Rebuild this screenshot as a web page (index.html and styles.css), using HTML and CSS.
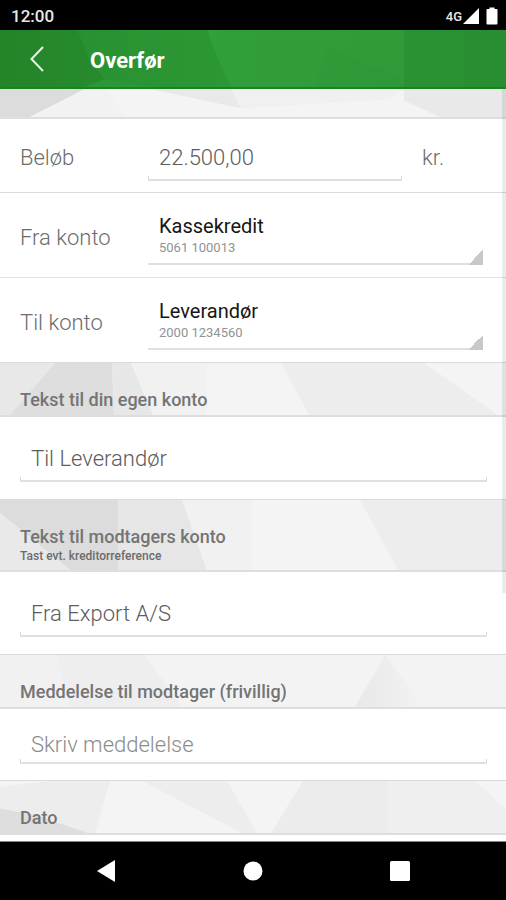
FILE: index.html
```html
<!DOCTYPE html>
<html lang="da">
<head>
<meta charset="utf-8">
<meta name="viewport" content="width=device-width, initial-scale=1">
<title>Overfør</title>
<link rel="stylesheet" href="styles.css">
</head>
<body>
<div class="status">
  <span class="clock">12:00</span>
  <span class="network">4G</span>
  <svg class="signal" width="16" height="16" viewBox="0 0 16 16"><path d="M16 0V16H0z"/></svg>
  <svg class="battery" width="12" height="18" viewBox="0 0 12 18"><path d="M3.500 0.500h5V2H10.500Q11.500 2 11.500 3V16Q11.500 17.500 10.500 17.500H1.500Q.5 17.500 .5 16.500V3Q.5 2 1.500 2H3.500z"/></svg>
</div>
<header class="appbar">
  <svg class="facets" viewBox="0 0 506 59" preserveAspectRatio="none" aria-hidden="true">
    <defs>
      <linearGradient id="left"><stop offset="0" stop-color="#238428"/><stop offset="1" stop-color="#278b2d"/></linearGradient>
      <linearGradient id="middle"><stop offset="0" stop-color="#299131"/><stop offset="1" stop-color="#2c9735"/></linearGradient>
      <linearGradient id="right"><stop offset="0" stop-color="#319f3b"/><stop offset="1" stop-color="#309a39"/></linearGradient>
    </defs>
    <rect width="506" height="59" fill="#2c9735"/>
    <polygon points="0,0 78,0 90,32 105,51 85,59 0,59" fill="url(#left)"/>
    <polygon points="78,0 207,0 218,30 231,59 150,59 105,51 90,32" fill="url(#middle)"/>
    <polygon points="207,0 404,0 404,59 231,59 218,30" fill="url(#right)"/>
    <polygon points="328,18 404,52 404,59 315,59" fill="#2e9637" opacity=".3"/>
    <polygon points="404,0 464,0 464,59 404,59" fill="#2b9233"/>
    <polygon points="464,0 506,0 506,59 464,59" fill="#298d31"/>
  </svg>
  <button class="back" type="button" aria-label="Tilbage">
    <svg width="14" height="26" viewBox="0 0 14 26"><path d="M13 1 1.500 13 13 25"/></svg>
  </button>
  <h1>Overfør</h1>
</header>
<main class="content">
  <div class="band band-top">
    <svg class="facets" viewBox="0 0 506 29" preserveAspectRatio="none" aria-hidden="true">
      <polygon points="0,0 85,0 30,29 0,29" fill="#dcdcdc"/>
      <polygon points="85,0 106,0 125,29 30,29" fill="#f2f2f2"/>
      <polygon points="150,0 231,0 241,20" fill="#e9e9e9"/>
      <polygon points="231,0 404,0 390,11 241,20" fill="#f0f0f0"/>
      <polygon points="404,0 506,0 506,29 440,29 404,12" fill="#e9e9e9"/>
    </svg>
  </div>
  <form>
    <div class="row row-amount">
      <label for="amount">Beløb</label>
      <input class="field" id="amount" type="text" inputmode="decimal" value="22.500,00">
      <span class="unit">kr.</span>
    </div>
    <div class="row row-account">
      <label for="from">Fra konto</label>
      <div class="picker">
        <select id="from"><option>Kassekredit</option></select>
        <span class="number">5061 100013</span>
      </div>
    </div>
    <div class="row row-account">
      <label for="to">Til konto</label>
      <div class="picker">
        <select id="to"><option>Leverandør</option></select>
        <span class="number">2000 1234560</span>
      </div>
    </div>
    <div class="band">
      <svg class="facets" viewBox="0 0 506 53" preserveAspectRatio="none" aria-hidden="true">
        <polygon points="0,0 55,0 10,53 0,53" fill="#e8e8e8"/>
        <polygon points="55,0 112,0 114,53 10,53" fill="#dedede"/>
        <polygon points="112,0 131,0 153,53 114,53" fill="#e7e7e7"/>
        <polygon points="131,0 207,0 207,53 153,53" fill="#f1f1f1"/>
        <polygon points="281,0 424,0 498,53 309,53" fill="#ededed"/>
      </svg>
      <label for="own-text">Tekst til din egen konto</label>
    </div>
    <div class="entry">
      <input class="field" id="own-text" type="text" value="Til Leverandør">
    </div>
    <div class="band">
      <svg class="facets" viewBox="0 0 506 71" preserveAspectRatio="none" aria-hidden="true">
        <polygon points="0,0 118,0 118,71 70,71 0,13" fill="#dcdcdc"/>
        <polygon points="0,13 70,71 0,71" fill="#e9e9e9"/>
        <polygon points="118,0 182,0 207,71 118,71" fill="#e6e6e6"/>
        <polygon points="182,0 252,0 252,71 207,71" fill="#f1f1f1"/>
        <polygon points="360,0 506,0 506,71 398,71" fill="#ededed"/>
      </svg>
      <label for="their-text">Tekst til modtagers konto</label>
      <small>Tast evt. kreditorreference</small>
    </div>
    <div class="entry">
      <input class="field" id="their-text" type="text" value="Fra Export A/S">
    </div>
    <div class="band">
      <svg class="facets" viewBox="0 0 506 53" preserveAspectRatio="none" aria-hidden="true">
        <defs>
          <linearGradient id="peak"><stop offset="0" stop-color="#e8e8e8"/><stop offset="1" stop-color="#f3f3f3"/></linearGradient>
        </defs>
        <polygon points="0,0 56,0 70,53 0,53" fill="#f1f1f1"/>
        <polygon points="56,0 145,0 182,53 70,53" fill="#eeeeee"/>
        <polygon points="145,0 506,0 506,53 182,53" fill="#f3f3f3"/>
        <polygon points="385,0 425,53 355,53" fill="url(#peak)"/>
      </svg>
      <label for="message">Meddelelse til modtager (frivillig)</label>
    </div>
    <div class="entry entry-short">
      <input class="field" id="message" type="text" placeholder="Skriv meddelelse">
    </div>
    <div class="band">
      <svg class="facets" viewBox="0 0 506 55" preserveAspectRatio="none" aria-hidden="true">
        <polygon points="0,6 50,0 110,0 95,55 88,55 0,30" fill="#ededed"/>
        <polygon points="0,29 35,36 88,55 0,55" fill="#dedede"/>
        <polygon points="142,0 227,0 257,55 242,55" fill="#ededed"/>
        <polygon points="303,0 388,0 388,55 271,55" fill="#ececec"/>
        <polygon points="388,0 475,0 506,30 506,55 388,55" fill="#efefef"/>
      </svg>
      <h2>Dato</h2>
    </div>
  </form>
  <div class="scrollbar"></div>
</main>
<nav class="navbar">
  <button type="button" aria-label="Tilbage"><svg width="20" height="22" viewBox="0 0 20 22"><path d="M19 0V22L1 11z"/></svg></button>
  <button type="button" aria-label="Hjem"><svg width="20" height="20" viewBox="0 0 20 20"><circle cx="10" cy="10" r="9.500"/></svg></button>
  <button type="button" aria-label="Seneste"><svg width="20" height="20" viewBox="0 0 20 20"><rect width="20" height="20" rx="1.500"/></svg></button>
</nav>
</body>
</html>
```

FILE: styles.css
```css
* {
  box-sizing: border-box;
}

body {
  display: flex;
  flex-direction: column;
  height: 100vh;
  margin: 0;
  font-family: Roboto, "Liberation Sans", sans-serif;
  color: #6c6c6c;
  background: #fff;
}

svg {
  display: block;
}

button {
  padding: 0;
  border: 0;
  background: none;
}

.status {
  display: flex;
  align-items: center;
  flex: none;
  height: 30px;
  padding: 2px 8px 0 11px;
  color: #e8e8e8;
  background: #000;
  fill: #fff;
}

.clock {
  flex: 1;
  font-size: 17px;
  font-weight: 500;
}

.network {
  margin-right: 1px;
  font-size: 13px;
  font-weight: 500;
}

.battery {
  margin-left: 7px;
}

.appbar {
  position: relative;
  display: flex;
  align-items: center;
  flex: none;
  height: 59px;
  padding-left: 30px;
  border-bottom: 2px solid #15861b;
  background: #2b9433;
}

.facets {
  position: absolute;
  inset: 0;
  z-index: -1;
  width: 100%;
  height: 100%;
}

.appbar,
.band {
  isolation: isolate;
}

.back {
  display: grid;
  place-items: center start;
  width: 60px;
  height: 48px;
}

.back path {
  fill: none;
  stroke: #e6f5e6;
  stroke-width: 2;
}

h1 {
  margin: 0;
  padding-top: 5px;
  font-size: 22px;
  font-weight: 700;
  line-height: 28px;
  color: #fff;
}

.content {
  position: relative;
  flex: 1;
  min-height: 0;
  overflow: hidden;
  border-bottom: 1px solid #888;
}

.band {
  position: relative;
  padding: 27px 20px 5px;
  border-top: 1px solid #dadada;
  border-bottom: 2px solid #dedede;
  background: #f4f4f4;
}

.band-top {
  height: 30px;
  padding: 0;
  border-top: 0;
}

.band label,
h2 {
  display: block;
  margin: 0;
  font-size: 18px;
  font-weight: 500;
  line-height: 20px;
  color: #747474;
}

small {
  display: block;
  font-size: 12px;
  font-weight: 500;
  line-height: 18px;
}

.row {
  display: grid;
  grid-template-columns: 128px 1fr;
  padding: 0 23px 0 20px;
  font-size: 22px;
  font-weight: 300;
}

.row-amount {
  grid-template-columns: 128px 1fr 81px;
  height: 74px;
  border-bottom: 1px solid #dadada;
}

.row-account {
  height: 84px;
}

.row-account + .row-account {
  height: 85px;
  border-top: 1px solid #e2e2e2;
}

.row label,
.unit {
  align-self: center;
  padding-top: 4px;
}

.unit {
  padding-left: 20px;
}

.field {
  width: 100%;
  min-width: 0;
  height: 44px;
  padding: 0 11px 2px;
  border: 0;
  border-bottom: 2px solid #e0e0e0;
  border-radius: 0;
  outline: 0;
  font: 300 22px Roboto, "Liberation Sans", sans-serif;
  color: #5c5c5c;
  background:
    linear-gradient(#d8d8d8, #d8d8d8) left bottom / 1px 3px no-repeat,
    linear-gradient(#d8d8d8, #d8d8d8) right bottom / 1px 3px no-repeat;
}

.field::placeholder {
  color: #8c8c8c;
  opacity: 1;
}

.row .field {
  align-self: end;
  margin-bottom: 11px;
}

.picker {
  display: grid;
  align-self: end;
  height: 60px;
  margin-bottom: 12px;
}

.picker select,
.number {
  grid-area: 1 / 1;
}

.picker select {
  appearance: none;
  width: 100%;
  padding: 0 16px 18px 11px;
  border: 0;
  border-radius: 0;
  outline: 0;
  font: 400 20px Roboto, "Liberation Sans", sans-serif;
  color: #161616;
  background:
    linear-gradient(135deg, transparent 50%, #c8c8ca 50%) right bottom / 15px 15px no-repeat,
    linear-gradient(#e0e0e0, #e0e0e0) left bottom / 100% 2px no-repeat;
}

.number {
  align-self: end;
  padding: 0 0 9px 11px;
  font-size: 13px;
  font-weight: 400;
  line-height: 16px;
  color: #929292;
  pointer-events: none;
}

.entry {
  height: 82px;
  padding: 21px 19px 0 20px;
}

.entry-short {
  height: 71px;
  padding-top: 19px;
}

.entry-short .field {
  height: 36px;
}

.scrollbar {
  position: absolute;
  top: 0;
  right: 0;
  width: 4px;
  height: 67%;
  background: rgba(0, 0, 0, 0.08);
}

.navbar {
  display: grid;
  grid-template-columns: repeat(3, 29%);
  justify-content: center;
  flex: none;
  height: 58px;
  background: #000;
}

.navbar button {
  display: grid;
  place-items: center;
}

.navbar svg {
  fill: #fff;
}
```
